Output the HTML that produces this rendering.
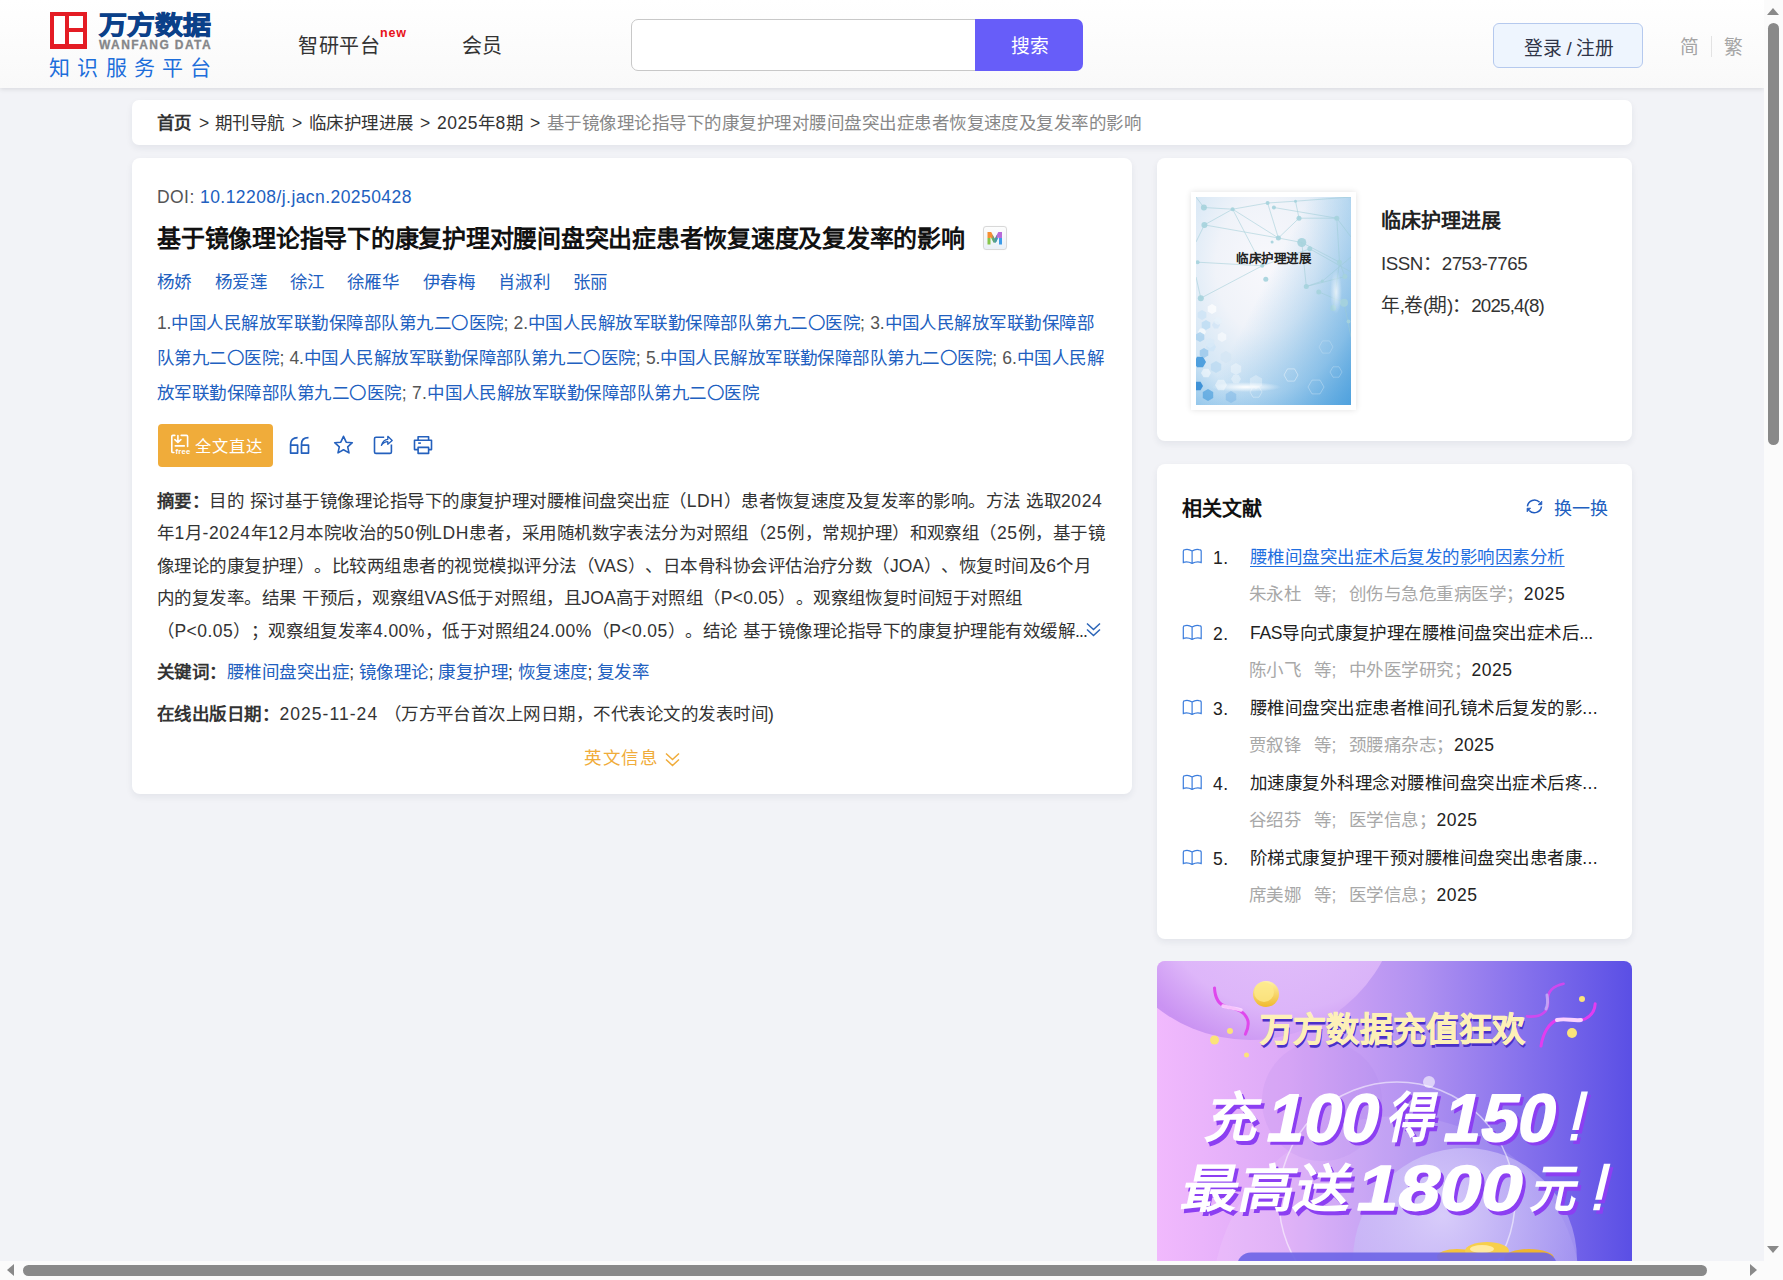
<!DOCTYPE html>
<html lang="zh-CN">
<head>
<meta charset="utf-8">
<style>
*{box-sizing:border-box;margin:0;padding:0}
html,body{width:1783px;height:1280px;overflow:hidden}
body{text-spacing-trim:space-all;font-family:"Liberation Sans",sans-serif;background:#f2f3f7;color:#333;position:relative;font-size:17.5px;font-weight:350}
.abs{position:absolute}
.header{position:absolute;left:0;top:0;width:1764px;height:88px;background:linear-gradient(#fff,#f9f9f9);box-shadow:0 1px 5px rgba(0,0,20,0.12)}
.card{position:absolute;background:#fff;border-radius:8px;box-shadow:0 3px 7px rgba(30,40,70,0.07)}
.t{position:absolute;white-space:nowrap;line-height:1;letter-spacing:0.48px}
.blue{color:#2160c0}
.dk{color:#333}
.lt{letter-spacing:0.06em}
</style>
</head>
<body>
<div class="header">
  <!-- logo -->
  <div class="abs" style="left:50px;top:12px;width:37px;height:37px;background:#e41c24"></div>
  <div class="abs" style="left:54px;top:16px;width:11px;height:28px;background:#fff"></div>
  <div class="abs" style="left:69px;top:16px;width:14px;height:12px;background:#fff"></div>
  <div class="abs" style="left:69px;top:32px;width:14px;height:12px;background:#fff"></div>
  <div class="t" style="left:99px;top:10px;font-size:28px;font-weight:900;letter-spacing:0;color:#0b4089;-webkit-text-stroke:1px #0b4089;transform:scale(1,0.9);transform-origin:0 100%">万方数据</div>
  <div class="t" style="left:99px;top:39px;font-size:12px;font-weight:bold;color:#858689;letter-spacing:1.4px;-webkit-text-stroke:0.3px #858689">WANFANG DATA</div>
  <div class="t" style="left:49px;top:57px;font-size:21px;font-weight:400;color:#1d6edb;letter-spacing:7.3px">知识服务平台</div>
  <div class="t" style="left:298px;top:36px;font-size:20px;letter-spacing:0.7px;color:#333">智研平台</div>
  <div class="t" style="left:380px;top:27px;font-size:12.5px;font-weight:bold;letter-spacing:0.8px;color:#e8121a">new</div>
  <div class="t" style="left:462px;top:36px;font-size:20px;letter-spacing:0;color:#333">会员</div>
  <!-- search -->
  <div class="abs" style="left:631px;top:19px;width:352px;height:52px;border:1px solid #c8c8c8;border-radius:7px 0 0 7px;background:#fff"></div>
  <div class="abs" style="left:975px;top:19px;width:108px;height:52px;background:#675df9;border-radius:0 7px 7px 0"></div>
  <div class="t" style="left:1011px;top:38px;font-size:18.75px;letter-spacing:-0.25px;color:#fff">搜索</div>
  <!-- login -->
  <div class="abs" style="left:1493px;top:23px;width:150px;height:45px;background:#eef5fe;border:1px solid #b5c9ee;border-radius:6px"></div>
  <div class="t" style="left:1524px;top:40px;font-size:18.75px;letter-spacing:-0.25px;color:#2e3447">登录 / 注册</div>
  <div class="t" style="left:1680px;top:39px;font-size:18.75px;letter-spacing:-0.25px;color:#a5a5a5">简</div>
  <div class="abs" style="left:1711px;top:36px;width:1px;height:21px;background:#e3e3e3"></div>
  <div class="t" style="left:1724px;top:39px;font-size:18.75px;letter-spacing:-0.25px;color:#a5a5a5">繁</div>
</div>

<!-- breadcrumb -->
<div class="card" style="left:132px;top:100px;width:1500px;height:45px;border-radius:7px"></div>
<div class="t" style="left:157px;top:115px;font-weight:bold">首页</div>
<div class="t" style="left:199px;top:115px">&gt;</div>
<div class="t" style="left:215px;top:115px">期刊导航</div>
<div class="t" style="left:292px;top:115px">&gt;</div>
<div class="t" style="left:309px;top:115px">临床护理进展</div>
<div class="t" style="left:420px;top:115px">&gt;</div>
<div class="t" id="bc" style="left:437px;top:115px"><span style="letter-spacing:0.52px">2025</span>年<span style="letter-spacing:0.52px">8</span>期</div>
<div class="t" style="left:530px;top:115px">&gt;</div>
<div class="t" style="left:547px;top:115px;color:#888">基于镜像理论指导下的康复护理对腰间盘突出症患者恢复速度及复发率的影响</div>

<!-- main card -->
<div class="card" style="left:132px;top:158px;width:1000px;height:636px"></div>
<div class="t" id="doi" style="left:157px;top:189px;color:#555"><span style="letter-spacing:0.43px">DOI:</span> <span class="blue"><span style="letter-spacing:0.43px">10.12208/j.jacn.20250428</span></span></div>
<div class="t" style="left:157px;top:227px;font-size:24px;letter-spacing:-0.25px;font-weight:bold;color:#111">基于镜像理论指导下的康复护理对腰间盘突出症患者恢复速度及复发率的影响</div>
<div class="abs" style="left:983px;top:226px;width:24px;height:24px;border:1px solid #d8d8d8;border-radius:3px;background:linear-gradient(#fdfdfd,#eaf0f7);box-shadow:0 0 1px rgba(0,0,0,0.08)"></div>
<svg class="abs" style="left:983px;top:226px" width="24" height="24" viewBox="0 0 24 24">
  <defs><clipPath id="mclip"><polygon points="4.5,18.6 4.5,6 8.2,6 11.75,12.8 15.3,6 19,6 19,18.6 16,18.6 16,11 12.9,16.6 10.6,16.6 7.5,11 7.5,18.6"/></clipPath></defs>
  <g clip-path="url(#mclip)">
    <rect x="0" y="0" width="11.75" height="12" fill="#f58f34"/>
    <rect x="0" y="12" width="11.75" height="12" fill="#86c54a"/>
    <rect x="11.75" y="0" width="12" height="12" fill="#b76ad9"/>
    <rect x="11.75" y="12" width="12" height="12" fill="#3d9be8"/>
    <rect x="9.5" y="9" width="4.5" height="9" fill="#4f9a8c" opacity="0.8"/>
  </g>
</svg>
<div class="t blue" style="left:157px;top:274px">杨娇</div>
<div class="t blue" style="left:215px;top:274px">杨爱莲</div>
<div class="t blue" style="left:290px;top:274px">徐江</div>
<div class="t blue" style="left:347px;top:274px">徐雁华</div>
<div class="t blue" style="left:423px;top:274px">伊春梅</div>
<div class="t blue" style="left:498px;top:274px">肖淑利</div>
<div class="t blue" style="left:573px;top:274px">张丽</div>
<div class="t" id="af1" style="left:157px;top:315px;color:#555"><span style="letter-spacing:-0.12px">1.</span><span class="blue">中国人民解放军联勤保障部队第九二〇医院</span><span style="letter-spacing:-0.12px">;</span> <span style="letter-spacing:-0.12px">2.</span><span class="blue">中国人民解放军联勤保障部队第九二〇医院</span><span style="letter-spacing:-0.12px">;</span> <span style="letter-spacing:-0.12px">3.</span><span class="blue">中国人民解放军联勤保障部</span></div>
<div class="t" id="af2" style="left:157px;top:350px;color:#555"><span class="blue">队第九二〇医院</span><span style="letter-spacing:-0.16px">;</span> <span style="letter-spacing:-0.16px">4.</span><span class="blue">中国人民解放军联勤保障部队第九二〇医院</span><span style="letter-spacing:-0.16px">;</span> <span style="letter-spacing:-0.16px">5.</span><span class="blue">中国人民解放军联勤保障部队第九二〇医院</span><span style="letter-spacing:-0.16px">;</span> <span style="letter-spacing:-0.16px">6.</span><span class="blue">中国人民解</span></div>
<div class="t" id="af3" style="left:157px;top:385px;color:#555"><span class="blue">放军联勤保障部队第九二〇医院</span><span style="letter-spacing:0.16px">;</span> <span style="letter-spacing:0.16px">7.</span><span class="blue">中国人民解放军联勤保障部队第九二〇医院</span></div>

<!-- action bar -->
<div class="abs" style="left:158px;top:424px;width:115px;height:43px;background:#f0ac3a;border-radius:4px"></div>
<svg class="abs" style="left:165px;top:430px" width="30" height="30" viewBox="0 0 30 30" fill="none" stroke="#fff" stroke-width="1.6" stroke-linecap="round" stroke-linejoin="round">
  <path d="M9.8 5.4H7.9Q6.8 5.4 6.8 6.5V21.4Q6.8 22.5 7.9 22.5H8.9M16.2 5.4H21.5Q22.6 5.4 22.6 6.5V16.4M12.9 5.6V12.2M9.9 9.6L12.9 12.4L15.9 9.6M10.3 15.9H19.3"/>
  <text x="10.6" y="23.8" font-size="7.6" fill="#fff" stroke="none" font-family="Liberation Sans" font-weight="bold" letter-spacing="0.2">free</text>
</svg>
<div class="t" style="left:195px;top:438px;font-size:16.25px;letter-spacing:0.9px;color:#fff">全文直达</div>
<svg class="abs" style="left:285px;top:430px" width="160" height="30" viewBox="0 0 160 30" fill="none" stroke="#2460bd" stroke-width="1.7" stroke-linejoin="round">
  <path d="M12.6 7.6C8 7.6 5.6 10.2 5.6 14.2V23.1H12.6V15.2H5.6M23.5 7.6C18.9 7.6 16.5 10.2 16.5 14.2V23.1H23.5V15.2H16.5"/>
  <path d="M58.5 6.3L61.2 12.2L67.3 12.7L62.7 16.9L64 22.9L58.5 19.8L53 22.9L54.3 16.9L49.7 12.7L55.8 12.2Z" stroke-width="1.6"/>
</svg>

<svg class="abs" style="left:368px;top:430px" width="70" height="30" viewBox="0 0 70 30" fill="none" stroke="#2460bd" stroke-width="1.6" stroke-linejoin="round">
  <path d="M16.2 7.3H8Q6.5 7.3 6.5 8.8V22Q6.5 23.4 8 23.4H22Q23.4 23.4 23.4 22V14.6"/>
  <path d="M13.4 15.4C14.6 11.6 16.6 9.6 19.8 9.3V6.3L24.2 10.5L19.8 14.3V11.6C17 11.8 15 13 13.4 15.4Z" stroke-width="1.3"/>
  <path d="M50.1 10.2V6.8H60.6V10.2M50.1 19.6H46.5V10.3H63.5V19.6H60.6M50.1 17.4H60.6V23.4H50.1Z"/>
  <path d="M50.2 13.1H52.9"/>
</svg>


<!-- abstract -->
<div class="t" id="ab1" style="left:157px;top:493px"><b>摘要：</b>目的 探讨基于镜像理论指导下的康复护理对腰椎间盘突出症（<span style="letter-spacing:0.59px">LDH</span>）患者恢复速度及复发率的影响。方法 选取<span style="letter-spacing:0.59px">2024</span></div>
<div class="t" id="ab2" style="left:157px;top:525px">年<span style="letter-spacing:0.68px">1</span>月<span style="letter-spacing:0.68px">-2024</span>年<span style="letter-spacing:0.68px">12</span>月本院收治的<span style="letter-spacing:0.68px">50</span>例<span style="letter-spacing:0.68px">LDH</span>患者，采用随机数字表法分为对照组（<span style="letter-spacing:0.68px">25</span>例，常规护理）和观察组（<span style="letter-spacing:0.68px">25</span>例，基于镜</div>
<div class="t" id="ab3" style="left:157px;top:558px">像理论的康复护理）。比较两组患者的视觉模拟评分法（<span style="letter-spacing:0.00px">VAS</span>）、日本骨科协会评估治疗分数（<span style="letter-spacing:0.00px">JOA</span>）、恢复时间及<span style="letter-spacing:0.00px">6</span>个月</div>
<div class="t" id="ab4" style="left:157px;top:590px">内的复发率。结果 干预后，观察组<span style="letter-spacing:0.21px">VAS</span>低于对照组，且<span style="letter-spacing:0.21px">JOA</span>高于对照组（<span style="letter-spacing:0.21px">P&lt;0.05</span>）。观察组恢复时间短于对照组</div>
<div class="t" id="ab5" style="left:157px;top:623px">（<span style="letter-spacing:0.44px">P&lt;0.05</span>）；观察组复发率<span style="letter-spacing:0.44px">4.00%</span>，低于对照组<span style="letter-spacing:0.44px">24.00%</span>（<span style="letter-spacing:0.44px">P&lt;0.05</span>）。结论 基于镜像理论指导下的康复护理能有效缓解<span style="letter-spacing:-0.9px">...</span></div>
<svg class="abs" style="left:1086px;top:622px" width="15" height="15" viewBox="0 0 15 15" fill="none" stroke="#2a64b7" stroke-width="1.5">
  <path d="M1 1.5l6.5 6 6.5-6M1 7.5l6.5 6 6.5-6"/>
</svg>
<div class="t" id="kw" style="left:157px;top:664px"><b>关键词：</b><span class="blue">腰椎间盘突出症</span><span style="letter-spacing:-0.75px">;</span> <span class="blue">镜像理论</span><span style="letter-spacing:-0.75px">;</span> <span class="blue">康复护理</span><span style="letter-spacing:-0.75px">;</span> <span class="blue">恢复速度</span><span style="letter-spacing:-0.75px">;</span> <span class="blue">复发率</span></div>
<div class="t" id="dt" style="left:157px;top:706px"><b>在线出版日期：</b><span style="letter-spacing:1.06px">2025-11-24</span> （万方平台首次上网日期，不代表论文的发表时间<span style="letter-spacing:1.06px">)</span></div>
<div class="t" style="left:584px;top:750px;letter-spacing:1.5px;color:#f0ac3a">英文信息</div>
<svg class="abs" style="left:665px;top:752px" width="15" height="15" viewBox="0 0 15 15" fill="none" stroke="#f0ac3a" stroke-width="1.5">
  <path d="M1 1.5l6.5 6 6.5-6M1 7.5l6.5 6 6.5-6"/>
</svg>

<!-- right card 1 -->
<div class="card" style="left:1157px;top:158px;width:475px;height:283px"></div>
<div class="abs" style="left:1191px;top:192px;width:165px;height:218px;background:#fff;box-shadow:0 0 6px rgba(0,0,0,0.12)"></div>
<div class="abs" style="left:1196px;top:197px;width:155px;height:208px;overflow:hidden;background:#eef3f9">
<svg width="155" height="208" viewBox="0 0 155 208" style="position:absolute;left:0;top:0">
<defs><radialGradient id="cv1" cx="0.45" cy="0.33" r="0.85"><stop offset="0" stop-color="#f8f8fc"/><stop offset="0.38" stop-color="#f0f3f9"/><stop offset="0.72" stop-color="#d3e6f5"/><stop offset="1" stop-color="#86c0e9"/></radialGradient>
<linearGradient id="cv2" x1="0.35" y1="0.55" x2="1" y2="1"><stop offset="0" stop-color="#4ea3de" stop-opacity="0"/><stop offset="1" stop-color="#3f98da" stop-opacity="0.75"/></linearGradient>
<radialGradient id="cv3" cx="0.5" cy="0.5" r="0.5"><stop offset="0" stop-color="#fff" stop-opacity="1"/><stop offset="1" stop-color="#fff" stop-opacity="0"/></radialGradient></defs>
<rect width="155" height="208" fill="url(#cv1)"/>
<rect width="155" height="208" fill="url(#cv2)"/>
<g stroke="#9ccbd6" stroke-width="0.7" opacity="0.75">
<line x1="7.9" y1="10.5" x2="36.6" y2="12.2"/>
<line x1="36.6" y1="12.2" x2="71.6" y2="6.0"/>
<line x1="8.4" y1="27.9" x2="36.6" y2="12.2"/>
<line x1="36.6" y1="12.2" x2="82.4" y2="41.0"/>
<line x1="8.4" y1="27.9" x2="82.4" y2="41.0"/>
<line x1="82.4" y1="41.0" x2="105.8" y2="45.5"/>
<line x1="71.6" y1="6.0" x2="82.4" y2="41.0"/>
<line x1="99.5" y1="4.2" x2="103.0" y2="21.2"/>
<line x1="103.0" y1="21.2" x2="140.8" y2="21.2"/>
<line x1="103.0" y1="21.2" x2="82.4" y2="41.0"/>
<line x1="105.8" y1="45.5" x2="143.5" y2="65.2"/>
<line x1="105.8" y1="45.5" x2="110.3" y2="89.5"/>
<line x1="110.3" y1="89.5" x2="126.4" y2="84.1"/>
<line x1="143.5" y1="65.2" x2="148.9" y2="79.6"/>
<line x1="4.8" y1="101.2" x2="66.2" y2="68.8"/>
<line x1="66.2" y1="68.8" x2="113.8" y2="51.8"/>
<line x1="1.6" y1="65.2" x2="66.2" y2="68.8"/>
<line x1="36.6" y1="12.2" x2="66.2" y2="68.8"/>
<line x1="140.8" y1="21.2" x2="155.0" y2="40.0"/>
<line x1="77.9" y1="10.5" x2="140.8" y2="21.2"/>
<line x1="122.8" y1="94.9" x2="148.0" y2="105.7"/>
<line x1="0.0" y1="45.0" x2="8.4" y2="27.9"/>
<line x1="7.9" y1="10.5" x2="0.0" y2="0.0"/>
<line x1="71.6" y1="6.0" x2="99.5" y2="4.2"/>
<line x1="99.5" y1="4.2" x2="155.0" y2="0.0"/>
<line x1="140.8" y1="21.2" x2="143.5" y2="65.2"/>
<line x1="143.5" y1="65.2" x2="137.2" y2="111.0"/>
<line x1="148.0" y1="105.7" x2="155.0" y2="140.0"/>
<line x1="113.8" y1="51.8" x2="155.0" y2="75.0"/>
<line x1="0.0" y1="80.0" x2="4.8" y2="101.2"/>
<line x1="110.3" y1="89.5" x2="148.9" y2="79.6"/>
<line x1="126.4" y1="84.1" x2="155.0" y2="60.0"/>
</g><g fill="#a6d3dd" opacity="0.9">
<circle cx="7.9" cy="10.5" r="3.0"/>
<circle cx="36.6" cy="12.2" r="2.0"/>
<circle cx="71.6" cy="6.0" r="2.0"/>
<circle cx="77.9" cy="10.5" r="2.0"/>
<circle cx="99.5" cy="4.2" r="1.5"/>
<circle cx="103.0" cy="21.2" r="2.5"/>
<circle cx="140.8" cy="21.2" r="2.5"/>
<circle cx="8.4" cy="27.9" r="3.0"/>
<circle cx="82.4" cy="41.0" r="2.5"/>
<circle cx="76.1" cy="45.1" r="1.5"/>
<circle cx="105.8" cy="45.5" r="4.5"/>
<circle cx="113.8" cy="51.8" r="2.5"/>
<circle cx="143.5" cy="65.2" r="2.5"/>
<circle cx="1.6" cy="65.2" r="2.0"/>
<circle cx="66.2" cy="68.8" r="2.0"/>
<circle cx="69.8" cy="82.3" r="2.5"/>
<circle cx="110.3" cy="89.5" r="2.5"/>
<circle cx="126.4" cy="84.1" r="1.5"/>
<circle cx="122.8" cy="94.9" r="2.5"/>
<circle cx="148.9" cy="79.6" r="2.5"/>
<circle cx="4.8" cy="101.2" r="3.0"/>
<circle cx="148.0" cy="105.7" r="4.0"/>
<circle cx="137.2" cy="111.0" r="3.0"/>
<circle cx="152.5" cy="124.5" r="2.0"/>
</g>
<polygon points="10.0,165.0 7.0,170.2 1.0,170.2 -2.0,165.0 1.0,159.8 7.0,159.8" fill="#2f8fd8" opacity="0.80"/>
<polygon points="7.0,189.0 4.5,193.3 -0.5,193.3 -3.0,189.0 -0.5,184.7 4.5,184.7" fill="#2a86d2" opacity="0.85"/>
<polygon points="20.0,150.0 17.5,154.3 12.5,154.3 10.0,150.0 12.5,145.7 17.5,145.7" fill="#cfe6f7" opacity="0.90"/>
<polygon points="15.0,176.0 12.5,180.3 7.5,180.3 5.0,176.0 7.5,171.7 12.5,171.7" fill="#ffffff" opacity="0.50"/>
<polygon points="31.0,188.0 28.0,193.2 22.0,193.2 19.0,188.0 22.0,182.8 28.0,182.8" fill="#ffffff" opacity="0.45"/>
<polygon points="45.0,182.0 42.5,186.3 37.5,186.3 35.0,182.0 37.5,177.7 42.5,177.7" fill="#ffffff" opacity="0.35"/>
<polygon points="10.0,135.0 8.0,138.5 4.0,138.5 2.0,135.0 4.0,131.5 8.0,131.5" fill="#ffffff" opacity="0.60"/>
<polygon points="24.0,128.0 22.0,131.5 18.0,131.5 16.0,128.0 18.0,124.5 22.0,124.5" fill="#cfe3f5" opacity="0.70"/>
<polygon points="102.0,178.0 98.5,184.1 91.5,184.1 88.0,178.0 91.5,171.9 98.5,171.9" fill="none" stroke="#ffffff" stroke-width="0.8" opacity="0.50"/>
<polygon points="128.0,190.0 124.0,196.9 116.0,196.9 112.0,190.0 116.0,183.1 124.0,183.1" fill="none" stroke="#ffffff" stroke-width="0.8" opacity="0.35"/>
<polygon points="146.0,175.0 143.0,180.2 137.0,180.2 134.0,175.0 137.0,169.8 143.0,169.8" fill="none" stroke="#ffffff" stroke-width="0.8" opacity="0.30"/>
<polygon points="66.0,195.0 63.0,200.2 57.0,200.2 54.0,195.0 57.0,189.8 63.0,189.8" fill="none" stroke="#ffffff" stroke-width="0.8" opacity="0.40"/>
<polygon points="137.0,150.0 133.5,156.1 126.5,156.1 123.0,150.0 126.5,143.9 133.5,143.9" fill="none" stroke="#ffffff" stroke-width="0.8" opacity="0.25"/>
<polygon points="10.3,120.5 6.0,123.0 1.7,120.5 1.7,115.5 6.0,113.0 10.3,115.5" fill="#cfe4f5" opacity="0.90"/><polygon points="20.3,114.5 16.0,117.0 11.7,114.5 11.7,109.5 16.0,107.0 20.3,109.5" fill="#ffffff" opacity="0.70"/><polygon points="14.3,130.5 10.0,133.0 5.7,130.5 5.7,125.5 10.0,123.0 14.3,125.5" fill="#bcdcf2" opacity="0.80"/><polygon points="25.5,126.0 22.0,128.0 18.5,126.0 18.5,122.0 22.0,120.0 25.5,122.0" fill="#e6f1fa" opacity="0.80"/><polygon points="8.3,142.5 4.0,145.0 -0.3,142.5 -0.3,137.5 4.0,135.0 8.3,137.5" fill="#a8d0ee" opacity="0.80"/><polygon points="18.3,148.5 14.0,151.0 9.7,148.5 9.7,143.5 14.0,141.0 18.3,143.5" fill="#d8eaf7" opacity="0.80"/><polygon points="30.3,142.5 26.0,145.0 21.7,142.5 21.7,137.5 26.0,135.0 30.3,137.5" fill="#ffffff" opacity="0.50"/><polygon points="12.3,158.5 8.0,161.0 3.7,158.5 3.7,153.5 8.0,151.0 12.3,153.5" fill="#8fc2ea" opacity="0.70"/><polygon points="35.2,163.0 30.0,166.0 24.8,163.0 24.8,157.0 30.0,154.0 35.2,157.0" fill="#cfe3f4" opacity="0.50"/><polygon points="25.2,173.0 20.0,176.0 14.8,173.0 14.8,167.0 20.0,164.0 25.2,167.0" fill="#b2d6f0" opacity="0.60"/><polygon points="45.2,175.0 40.0,178.0 34.8,175.0 34.8,169.0 40.0,166.0 45.2,169.0" fill="#ffffff" opacity="0.35"/><polygon points="17.2,201.0 12.0,204.0 6.8,201.0 6.8,195.0 12.0,192.0 17.2,195.0" fill="#3d97da" opacity="0.60"/><polygon points="40.2,203.0 35.0,206.0 29.8,203.0 29.8,197.0 35.0,194.0 40.2,197.0" fill="#7bb6e6" opacity="0.50"/><polygon points="66.1,188.5 60.0,192.0 53.9,188.5 53.9,181.5 60.0,178.0 66.1,181.5" fill="#ffffff" opacity="0.30"/><ellipse cx="50" cy="190" rx="35" ry="5" fill="url(#cv3)"/><ellipse cx="140" cy="95" rx="6" ry="22" fill="url(#cv3)" opacity="0.7"/>
</svg>
</div>
<div class="t" style="left:1236px;top:253px;font-size:12.5px;letter-spacing:-0.5px;font-weight:bold;color:#222">临床护理进展</div>
<div class="t" style="left:1381px;top:211px;font-size:20px;letter-spacing:0;font-weight:bold;color:#222">临床护理进展</div>
<div class="t" id="issn" style="left:1381px;top:255px;font-size:18.75px;letter-spacing:-0.25px;color:#333"><span style="letter-spacing:-0.46px">ISSN</span>：<span style="letter-spacing:-0.46px">2753-7765</span></div>
<div class="t" id="vol" style="left:1381px;top:297px;font-size:18.75px;letter-spacing:-0.25px;color:#333">年<span style="letter-spacing:-0.83px">,</span>卷<span style="letter-spacing:-0.83px">(</span>期<span style="letter-spacing:-0.83px">)</span>：<span style="letter-spacing:-0.83px">2025,4(8)</span></div>

<!-- right card 2 -->
<div class="card" style="left:1157px;top:464px;width:475px;height:475px"></div>
<div class="t" style="left:1182px;top:499px;font-size:20px;letter-spacing:0;font-weight:bold;color:#111">相关文献</div>
<svg class="abs" style="left:1520px;top:493px" width="28" height="25" viewBox="0 0 28 25" fill="none" stroke="#1f5bbf" stroke-width="1.5">
  <path d="M7.4 13.3A7.1 7.1 0 0 1 19.6 9.3M21.5 13.5A7.1 7.1 0 0 1 9.2 17.4"/>
  <path d="M21.8 8.2V11.7H18.2Z M7.1 18.8V15.2H10.6Z" fill="#1f5bbf" stroke-width="0.8"/>
</svg>
<div class="t blue" style="left:1554px;top:500px;font-size:18px;letter-spacing:0">换一换</div>

<svg class="abs" style="left:1178px;top:544px" width="30" height="25" viewBox="0 0 30 25" fill="none" stroke="#3b7ddd" stroke-width="1.2" stroke-linejoin="round"><path d="M5.3 19.3V7.2Q5.3 5.6 7.3 5.6Q10.5 4.7 14.1 7.1Q17.7 4.7 20.9 5.6Q23.2 5.6 23.2 7.2V19.3M5.3 18.4Q9.5 17 14.1 19.4Q18.7 17 23.2 18.4M14.1 7.1V19.4"/></svg>
<div class="t" style="left:1213px;top:550px;color:#222">1.</div>
<div class="t" style="left:1250px;top:549px;color:#1f6ee0;text-decoration:underline;text-underline-offset:3px">腰椎间盘突出症术后复发的影响因素分析</div>
<div class="t" style="left:1249px;top:586px;color:#a8a8a8">朱永杜</div>
<div class="t" style="left:1314px;top:586px;color:#a8a8a8">等;</div>
<div class="t" id="ra1" style="left:1349px;top:586px;color:#a8a8a8">创伤与急危重病医学；<span style="color:#222"><span style="letter-spacing:0.63px">2025</span></span></div>
<svg class="abs" style="left:1178px;top:620px" width="30" height="25" viewBox="0 0 30 25" fill="none" stroke="#3b7ddd" stroke-width="1.2" stroke-linejoin="round"><path d="M5.3 19.3V7.2Q5.3 5.6 7.3 5.6Q10.5 4.7 14.1 7.1Q17.7 4.7 20.9 5.6Q23.2 5.6 23.2 7.2V19.3M5.3 18.4Q9.5 17 14.1 19.4Q18.7 17 23.2 18.4M14.1 7.1V19.4"/></svg>
<div class="t" style="left:1213px;top:626px;color:#222">2.</div>
<div class="t" id="rt2" style="left:1250px;top:625px;color:#222"><span style="letter-spacing:-0.34px">FAS</span>导向式康复护理在腰椎间盘突出症术后<span style="letter-spacing:-0.34px">...</span></div>
<div class="t" style="left:1249px;top:662px;color:#a8a8a8">陈小飞</div>
<div class="t" style="left:1314px;top:662px;color:#a8a8a8">等;</div>
<div class="t" id="ra2" style="left:1349px;top:662px;color:#a8a8a8">中外医学研究；<span style="color:#222"><span style="letter-spacing:0.52px">2025</span></span></div>
<svg class="abs" style="left:1178px;top:695px" width="30" height="25" viewBox="0 0 30 25" fill="none" stroke="#3b7ddd" stroke-width="1.2" stroke-linejoin="round"><path d="M5.3 19.3V7.2Q5.3 5.6 7.3 5.6Q10.5 4.7 14.1 7.1Q17.7 4.7 20.9 5.6Q23.2 5.6 23.2 7.2V19.3M5.3 18.4Q9.5 17 14.1 19.4Q18.7 17 23.2 18.4M14.1 7.1V19.4"/></svg>
<div class="t" style="left:1213px;top:701px;color:#222">3.</div>
<div class="t" id="rt3" style="left:1250px;top:700px;color:#222">腰椎间盘突出症患者椎间孔镜术后复发的影<span style="letter-spacing:0.48px">...</span></div>
<div class="t" style="left:1249px;top:737px;color:#a8a8a8">贾叙锋</div>
<div class="t" style="left:1314px;top:737px;color:#a8a8a8">等;</div>
<div class="t" id="ra3" style="left:1349px;top:737px;color:#a8a8a8">颈腰痛杂志；<span style="color:#222"><span style="letter-spacing:0.36px">2025</span></span></div>
<svg class="abs" style="left:1178px;top:770px" width="30" height="25" viewBox="0 0 30 25" fill="none" stroke="#3b7ddd" stroke-width="1.2" stroke-linejoin="round"><path d="M5.3 19.3V7.2Q5.3 5.6 7.3 5.6Q10.5 4.7 14.1 7.1Q17.7 4.7 20.9 5.6Q23.2 5.6 23.2 7.2V19.3M5.3 18.4Q9.5 17 14.1 19.4Q18.7 17 23.2 18.4M14.1 7.1V19.4"/></svg>
<div class="t" style="left:1213px;top:776px;color:#222">4.</div>
<div class="t" id="rt4" style="left:1250px;top:775px;color:#222">加速康复外科理念对腰椎间盘突出症术后疼<span style="letter-spacing:0.48px">...</span></div>
<div class="t" style="left:1249px;top:812px;color:#a8a8a8">谷绍芬</div>
<div class="t" style="left:1314px;top:812px;color:#a8a8a8">等;</div>
<div class="t" id="ra4" style="left:1349px;top:812px;color:#a8a8a8">医学信息；<span style="color:#222"><span style="letter-spacing:0.52px">2025</span></span></div>
<svg class="abs" style="left:1178px;top:845px" width="30" height="25" viewBox="0 0 30 25" fill="none" stroke="#3b7ddd" stroke-width="1.2" stroke-linejoin="round"><path d="M5.3 19.3V7.2Q5.3 5.6 7.3 5.6Q10.5 4.7 14.1 7.1Q17.7 4.7 20.9 5.6Q23.2 5.6 23.2 7.2V19.3M5.3 18.4Q9.5 17 14.1 19.4Q18.7 17 23.2 18.4M14.1 7.1V19.4"/></svg>
<div class="t" style="left:1213px;top:851px;color:#222">5.</div>
<div class="t" id="rt5" style="left:1250px;top:850px;color:#222">阶梯式康复护理干预对腰椎间盘突出患者康<span style="letter-spacing:0.48px">...</span></div>
<div class="t" style="left:1249px;top:887px;color:#a8a8a8">席美娜</div>
<div class="t" style="left:1314px;top:887px;color:#a8a8a8">等;</div>
<div class="t" id="ra5" style="left:1349px;top:887px;color:#a8a8a8">医学信息；<span style="color:#222"><span style="letter-spacing:0.52px">2025</span></span></div>

<!-- banner -->
<div class="abs" style="left:1157px;top:961px;width:475px;height:300px;border-radius:8px 8px 0 0;overflow:hidden;background:linear-gradient(90deg,#f1b9fd 0%,#dcaaf7 28%,#b192f1 55%,#8470ec 78%,#5a4fe5 100%)">
<svg width="475" height="300" viewBox="0 0 475 300" style="position:absolute;left:0;top:0">
  <defs>
    <radialGradient id="bc1" cx="0.62" cy="0.45" r="0.6"><stop offset="0" stop-color="#e6c8fc"/><stop offset="0.75" stop-color="#dcb6f9"/><stop offset="1" stop-color="#c68ff1"/></radialGradient>
    <radialGradient id="bc2" cx="0.4" cy="0.3" r="0.75"><stop offset="0" stop-color="#dcd2fb" stop-opacity="0.9"/><stop offset="1" stop-color="#b8a8f3" stop-opacity="0.5"/></radialGradient>
    <linearGradient id="coin" x1="0" y1="0" x2="0" y2="1"><stop offset="0" stop-color="#fff2a8"/><stop offset="1" stop-color="#f0b92e"/></linearGradient>
  </defs>
  <circle cx="93" cy="-71" r="150" fill="url(#bc1)" opacity="0.9"/>
  <circle cx="240" cy="340" r="185" fill="#ffffff" opacity="0.10"/>
  <circle cx="308" cy="299" r="112" fill="url(#bc2)"/><circle cx="165" cy="140" r="60" fill="#a878e8" opacity="0.12"/>
  <circle cx="240" cy="239" r="118" fill="none" stroke="#ffffff" stroke-opacity="0.55" stroke-width="1.5"/>
  <circle cx="272" cy="121" r="6" fill="#ffffff" opacity="0.6"/>
  <circle cx="109" cy="33" r="13" fill="url(#coin)"/>
  <circle cx="107" cy="31" r="10" fill="#fde98a" opacity="0.8"/>
  <circle cx="57.5" cy="79" r="4.5" fill="#fbe37a"/>
  <circle cx="73" cy="70" r="3" fill="#fbe37a"/>
  <circle cx="89.5" cy="94" r="2.5" fill="#fbe37a"/>
  <circle cx="425" cy="38" r="3" fill="#fbe37a"/>
  <circle cx="415" cy="72" r="5" fill="#fbe37a"/>
  <path d="M57.5 26.9C58 38 62 44 70 46C80 48 88 50 91 60C92 66 90 70 88.4 73.1" fill="none" stroke="#df48ec" stroke-width="3" stroke-linecap="round"/><path d="M66 45C72 47 78 47 84 49" fill="none" stroke="#fbd8ff" stroke-width="3.5" stroke-linecap="round" opacity="0.85"/>
  <path d="M406.6 22.7C396 25 390 30 391 40C392 50 385 57 370 55.4" fill="none" stroke="#d845ee" stroke-width="2.6" stroke-linecap="round" opacity="0.9"/><path d="M390 34C391 40 391 44 389 48" fill="none" stroke="#c7b4f8" stroke-width="3" stroke-linecap="round" opacity="0.8"/><path d="M384 85C386 72 392 62 400 59C410 56 420 62 428 58C436 54 438 48 438.2 42.8" fill="none" stroke="#e23cf0" stroke-width="3" stroke-linecap="round"/><path d="M400 59C408 57 416 60 424 59" fill="none" stroke="#ffe2ff" stroke-width="4" stroke-linecap="round" opacity="0.9"/>
  <ellipse cx="300" cy="296" rx="20" ry="8" fill="#f5c43a"/><ellipse cx="330" cy="290" rx="22" ry="9" fill="#f7cf4a"/><ellipse cx="372" cy="297" rx="25" ry="9" fill="#efb52e"/><ellipse cx="325" cy="288" rx="12" ry="4" fill="#ffeaa0"/>
  <rect x="80" y="291.5" width="320" height="30" rx="14" fill="#6f66e6" opacity="0.92"/>
</svg>
<svg width="475" height="300" viewBox="0 0 475 300" style="position:absolute;left:0;top:0;font-family:'Liberation Sans',sans-serif">
<polygon points='416.0,183.1 422.5,183.1 423.9,176.6 417.4,176.6' fill='#8c3ff2'/><polygon points='418.2,172.6 424.7,172.6 433.9,134.1 427.4,134.1' fill='#8c3ff2'/><text transform='translate(49.1 179.8) skewX(-12)' x='0' y='0' font-size='54.4' font-weight='900' fill='#8c3ff2' textLength='53.4' lengthAdjust='spacingAndGlyphs'>充</text>
<text transform='translate(46.1 176.3) skewX(-12)' x='0' y='0' font-size='54.4' font-weight='900' fill='#ffffff' textLength='53.4' lengthAdjust='spacingAndGlyphs'>充</text>
<text transform='translate(109.8 183.1) skewX(-12)' x='0' y='0' font-size='67.1' font-family='Liberation Sans' font-weight='bold' stroke-width='1.6' stroke-linejoin='round' stroke='#8c3ff2' fill='#8c3ff2' textLength='111.3' lengthAdjust='spacingAndGlyphs'>100</text>
<text transform='translate(106.8 179.6) skewX(-12)' x='0' y='0' font-size='67.1' font-family='Liberation Sans' font-weight='bold' stroke-width='1.6' stroke-linejoin='round' stroke='#ffffff' fill='#ffffff' textLength='111.3' lengthAdjust='spacingAndGlyphs'>100</text>
<text transform='translate(231.1 179.8) skewX(-12)' x='0' y='0' font-size='54.4' font-weight='900' fill='#8c3ff2' textLength='48.2' lengthAdjust='spacingAndGlyphs'>得</text>
<text transform='translate(228.1 176.3) skewX(-12)' x='0' y='0' font-size='54.4' font-weight='900' fill='#ffffff' textLength='48.2' lengthAdjust='spacingAndGlyphs'>得</text>
<text transform='translate(286.6 183.1) skewX(-12)' x='0' y='0' font-size='67.1' font-family='Liberation Sans' font-weight='bold' stroke-width='1.6' stroke-linejoin='round' stroke='#8c3ff2' fill='#8c3ff2' textLength='111.3' lengthAdjust='spacingAndGlyphs'>150</text>
<text transform='translate(283.6 179.6) skewX(-12)' x='0' y='0' font-size='67.1' font-family='Liberation Sans' font-weight='bold' stroke-width='1.6' stroke-linejoin='round' stroke='#ffffff' fill='#ffffff' textLength='111.3' lengthAdjust='spacingAndGlyphs'>150</text>
<text transform='translate(25.3 249.7) skewX(-12)' x='0' y='0' font-size='51.7' font-weight='900' fill='#8c3ff2' textLength='169.2' lengthAdjust='spacingAndGlyphs'>最高送</text>
<text transform='translate(22.3 246.2) skewX(-12)' x='0' y='0' font-size='51.7' font-weight='900' fill='#ffffff' textLength='169.2' lengthAdjust='spacingAndGlyphs'>最高送</text>
<text transform='translate(199.6 252.8) skewX(-12)' x='0' y='0' font-size='63.7' font-family='Liberation Sans' font-weight='bold' stroke-width='1.6' stroke-linejoin='round' stroke='#8c3ff2' fill='#8c3ff2' textLength='165.6' lengthAdjust='spacingAndGlyphs'>1800</text>
<text transform='translate(196.6 249.3) skewX(-12)' x='0' y='0' font-size='63.7' font-family='Liberation Sans' font-weight='bold' stroke-width='1.6' stroke-linejoin='round' stroke='#ffffff' fill='#ffffff' textLength='165.6' lengthAdjust='spacingAndGlyphs'>1800</text>
<text transform='translate(375.0 249.7) skewX(-12)' x='0' y='0' font-size='51.7' font-weight='900' fill='#8c3ff2' textLength='45.7' lengthAdjust='spacingAndGlyphs'>元</text>
<text transform='translate(372.0 246.2) skewX(-12)' x='0' y='0' font-size='51.7' font-weight='900' fill='#ffffff' textLength='45.7' lengthAdjust='spacingAndGlyphs'>元</text>
<polygon points='413.0,179.6 419.5,179.6 420.9,173.1 414.4,173.1' fill='#ffffff'/><polygon points='415.2,169.1 421.7,169.1 430.9,130.6 424.4,130.6' fill='#ffffff'/><polygon points='439.0,252.8 445.5,252.8 446.9,246.3 440.4,246.3' fill='#8c3ff2'/><polygon points='441.2,242.3 447.7,242.3 456.4,206.3 449.9,206.3' fill='#8c3ff2'/><polygon points='436.0,249.3 442.5,249.3 443.9,242.8 437.4,242.8' fill='#ffffff'/><polygon points='438.2,238.8 444.7,238.8 453.4,202.8 446.9,202.8' fill='#ffffff'/></svg>
<div class="t" style="left:103px;top:52px;font-size:33px;font-weight:900;letter-spacing:0.2px;color:#fdf0b8;-webkit-text-stroke:0.8px #fdf0b8;text-shadow:1px 3px 0 #4a30c8">万方数据充值狂欢</div>
</div>

<!-- scrollbars -->
<div class="abs" style="left:1764px;top:0;width:19px;height:1261px;background:#fbfbfb"></div>
<div class="abs" style="left:1768px;top:23px;width:11px;height:422px;background:#898989;border-radius:6px"></div>
<div class="abs" style="left:1767px;top:8px;width:0;height:0;border-left:6.5px solid transparent;border-right:6.5px solid transparent;border-bottom:7px solid #898989"></div>
<div class="abs" style="left:1767px;top:1246px;width:0;height:0;border-left:6.5px solid transparent;border-right:6.5px solid transparent;border-top:7px solid #898989"></div>
<div class="abs" style="left:0;top:1261px;width:1783px;height:19px;background:#fbfbfb"></div>
<div class="abs" style="left:23px;top:1265px;width:1684px;height:11px;background:#898989;border-radius:6px"></div>
<div class="abs" style="left:7px;top:1264px;width:0;height:0;border-top:6.5px solid transparent;border-bottom:6.5px solid transparent;border-right:7px solid #898989"></div>
<div class="abs" style="left:1750px;top:1264px;width:0;height:0;border-top:6.5px solid transparent;border-bottom:6.5px solid transparent;border-left:7px solid #898989"></div>
</body>
</html>
